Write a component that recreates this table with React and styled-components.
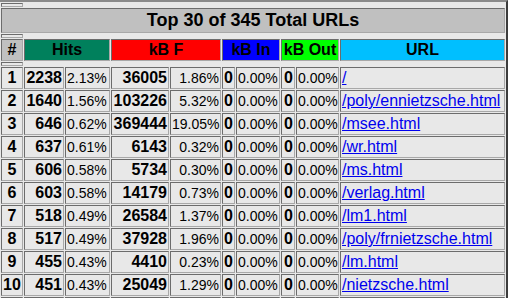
import React from "react";
import styled, { createGlobalStyle } from "styled-components";

const GlobalStyle = createGlobalStyle`
  html, body {
    margin: 0;
    padding: 0;
    overflow: hidden;
    background: #e8e8e8;
    font-family: "Liberation Sans", Arial, Helvetica, sans-serif;
    color: #000;
  }
`;

const Table = styled.table`
  width: 510px;
  margin-left: -2px;
  table-layout: fixed;
  border-collapse: separate;
  border-spacing: 1px;
  border-style: solid;
  border-width: 2px;
  border-color: #8a8a8a #3c3c3c #3c3c3c #8a8a8a;
  background: #e8e8e8;
`;

const cellBorder = `
  border-style: solid;
  border-width: 1px;
  border-color: #6c6c6c #a8a8a8 #a8a8a8 #6c6c6c;
  padding: 1px;
`;

const Spacer = styled.th`
  ${cellBorder}
  height: 0;
  padding: 1px;
`;

const Title = styled.th`
  ${cellBorder}
  background: #c0c0c0;
  font-size: 18px;
  line-height: 21px;
  font-weight: bold;
  text-align: center;
`;

const HeadCell = styled.th`
  ${cellBorder}
  background: ${({ $bg }) => $bg};
  font-size: 16px;
  line-height: 18px;
  font-weight: bold;
  text-align: center;
  white-space: nowrap;
  overflow: hidden;
`;

const Cell = styled.td`
  ${cellBorder}
  height: 18px;
  font-size: ${({ $pct }) => ($pct ? "14px" : "16px")};
  font-weight: ${({ $pct }) => ($pct ? "normal" : "bold")};
  line-height: 18px;
  text-align: ${({ $align }) => $align || "right"};
  white-space: nowrap;
  overflow: visible;
`;

const UrlCell = styled.td`
  ${cellBorder}
  font-size: 16px;
  line-height: 18px;
  text-align: left;
  white-space: nowrap;
  overflow: hidden;

  a {
    color: #0000ee;
    text-decoration: underline;
  }
`;

const widths = [22, 40, 45, 58, 51, 13, 44, 14, 43, 165];

const rows = [
  [1, 2238, "2.13%", 36005, "1.86%", "/"],
  [2, 1640, "1.56%", 103226, "5.32%", "/poly/ennietzsche.html"],
  [3, 646, "0.62%", 369444, "19.05%", "/msee.html"],
  [4, 637, "0.61%", 6143, "0.32%", "/wr.html"],
  [5, 606, "0.58%", 5734, "0.30%", "/ms.html"],
  [6, 603, "0.58%", 14179, "0.73%", "/verlag.html"],
  [7, 518, "0.49%", 26584, "1.37%", "/lm1.html"],
  [8, 517, "0.49%", 37928, "1.96%", "/poly/frnietzsche.html"],
  [9, 455, "0.43%", 4410, "0.23%", "/lm.html"],
  [10, 451, "0.43%", 25049, "1.29%", "/nietzsche.html"],
];

const SpacerRow = () => (
  <tr>
    <Spacer />
  </tr>
);

export default function App() {
  return (
    <>
      <GlobalStyle />
      <Table>
        <colgroup>
          {widths.map((w, i) => (
            <col key={i} style={{ width: w }} />
          ))}
        </colgroup>
        <tbody>
          <SpacerRow />
          <tr>
            <Title colSpan={10}>Top 30 of 345 Total URLs</Title>
          </tr>
          <SpacerRow />
          <tr>
            <HeadCell $bg="#c0c0c0">#</HeadCell>
            <HeadCell colSpan={2} $bg="#00805c">Hits</HeadCell>
            <HeadCell colSpan={2} $bg="#ff0000">kB F</HeadCell>
            <HeadCell colSpan={2} $bg="#0000ff">kB In</HeadCell>
            <HeadCell colSpan={2} $bg="#00ff00">kB Out</HeadCell>
            <HeadCell $bg="#00bfff">URL</HeadCell>
          </tr>
          <SpacerRow />
          {rows.map(([n, hits, hitsPct, kb, kbPct, url]) => (
            <tr key={n}>
              <Cell $align="center">{n}</Cell>
              <Cell>{hits}</Cell>
              <Cell $pct $align="left">{hitsPct}</Cell>
              <Cell>{kb}</Cell>
              <Cell $pct>{kbPct}</Cell>
              <Cell>0</Cell>
              <Cell $pct $align="left">0.00%</Cell>
              <Cell>0</Cell>
              <Cell $pct $align="left">0.00%</Cell>
              <UrlCell>
                <a href="#">{url}</a>
              </UrlCell>
            </tr>
          ))}
          <tr>
            {widths.map((w, i) => (
              <Cell key={i} />
            ))}
          </tr>
        </tbody>
      </Table>
    </>
  );
}
